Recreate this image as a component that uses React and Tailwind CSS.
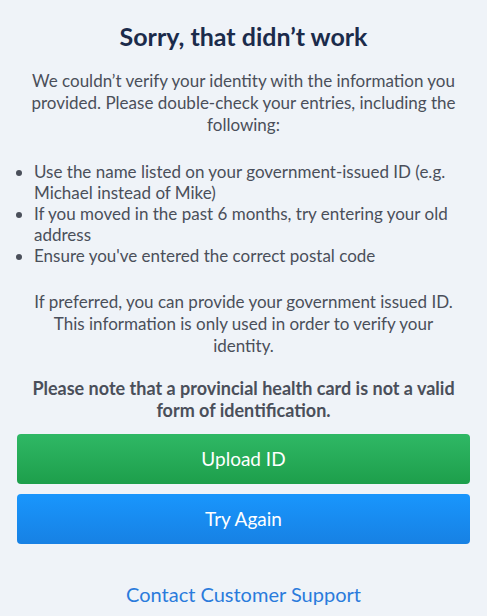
export default function App() {
  return (
    <div className="min-h-screen bg-[#eff3f8] font-['Lato','Liberation_Sans',sans-serif] text-[17px] text-[#4a4f5a]">
      <div className="flex flex-col px-[17px] pt-[21px]">
        <h1 className="text-center text-[25px] font-bold leading-[30px] text-[#1b2b4b]">
          Sorry, that didn’t work
        </h1>

        <p className="mt-[19px] text-center leading-[22px]">
          We couldn’t verify your identity with the information you provided. Please double-check your entries, including the following:
        </p>

        <ul className="mt-[25px] list-disc pl-[17px] leading-[21px]">
          <li>Use the name listed on your government-issued ID (e.g. Michael instead of Mike)</li>
          <li>If you moved in the past 6 months, try entering your old address</li>
          <li>Ensure you've entered the correct postal code</li>
        </ul>

        <p className="mt-[25px] px-[10px] text-center leading-[22px]">
          If preferred, you can provide your government issued ID. This information is only used in order to verify your identity.
        </p>

        <p className="mt-[20px] px-[8px] text-center text-[18px] font-bold leading-[22px]">
          Please note that a provincial health card is not a valid form of identification.
        </p>

        <button className="mt-[13px] h-[50px] w-full rounded-[4px] bg-gradient-to-b from-[#2fb865] to-[#1d9f4b] text-[19px] text-white">
          Upload ID
        </button>
        <button className="mt-[10px] h-[50px] w-full rounded-[4px] bg-gradient-to-b from-[#1996fd] to-[#1781e4] text-[19px] text-white">
          Try Again
        </button>

        <a href="#" className="mt-[35px] text-center text-[20px] text-[#2a7bdc]">
          Contact Customer Support
        </a>
      </div>
    </div>
  );
}
